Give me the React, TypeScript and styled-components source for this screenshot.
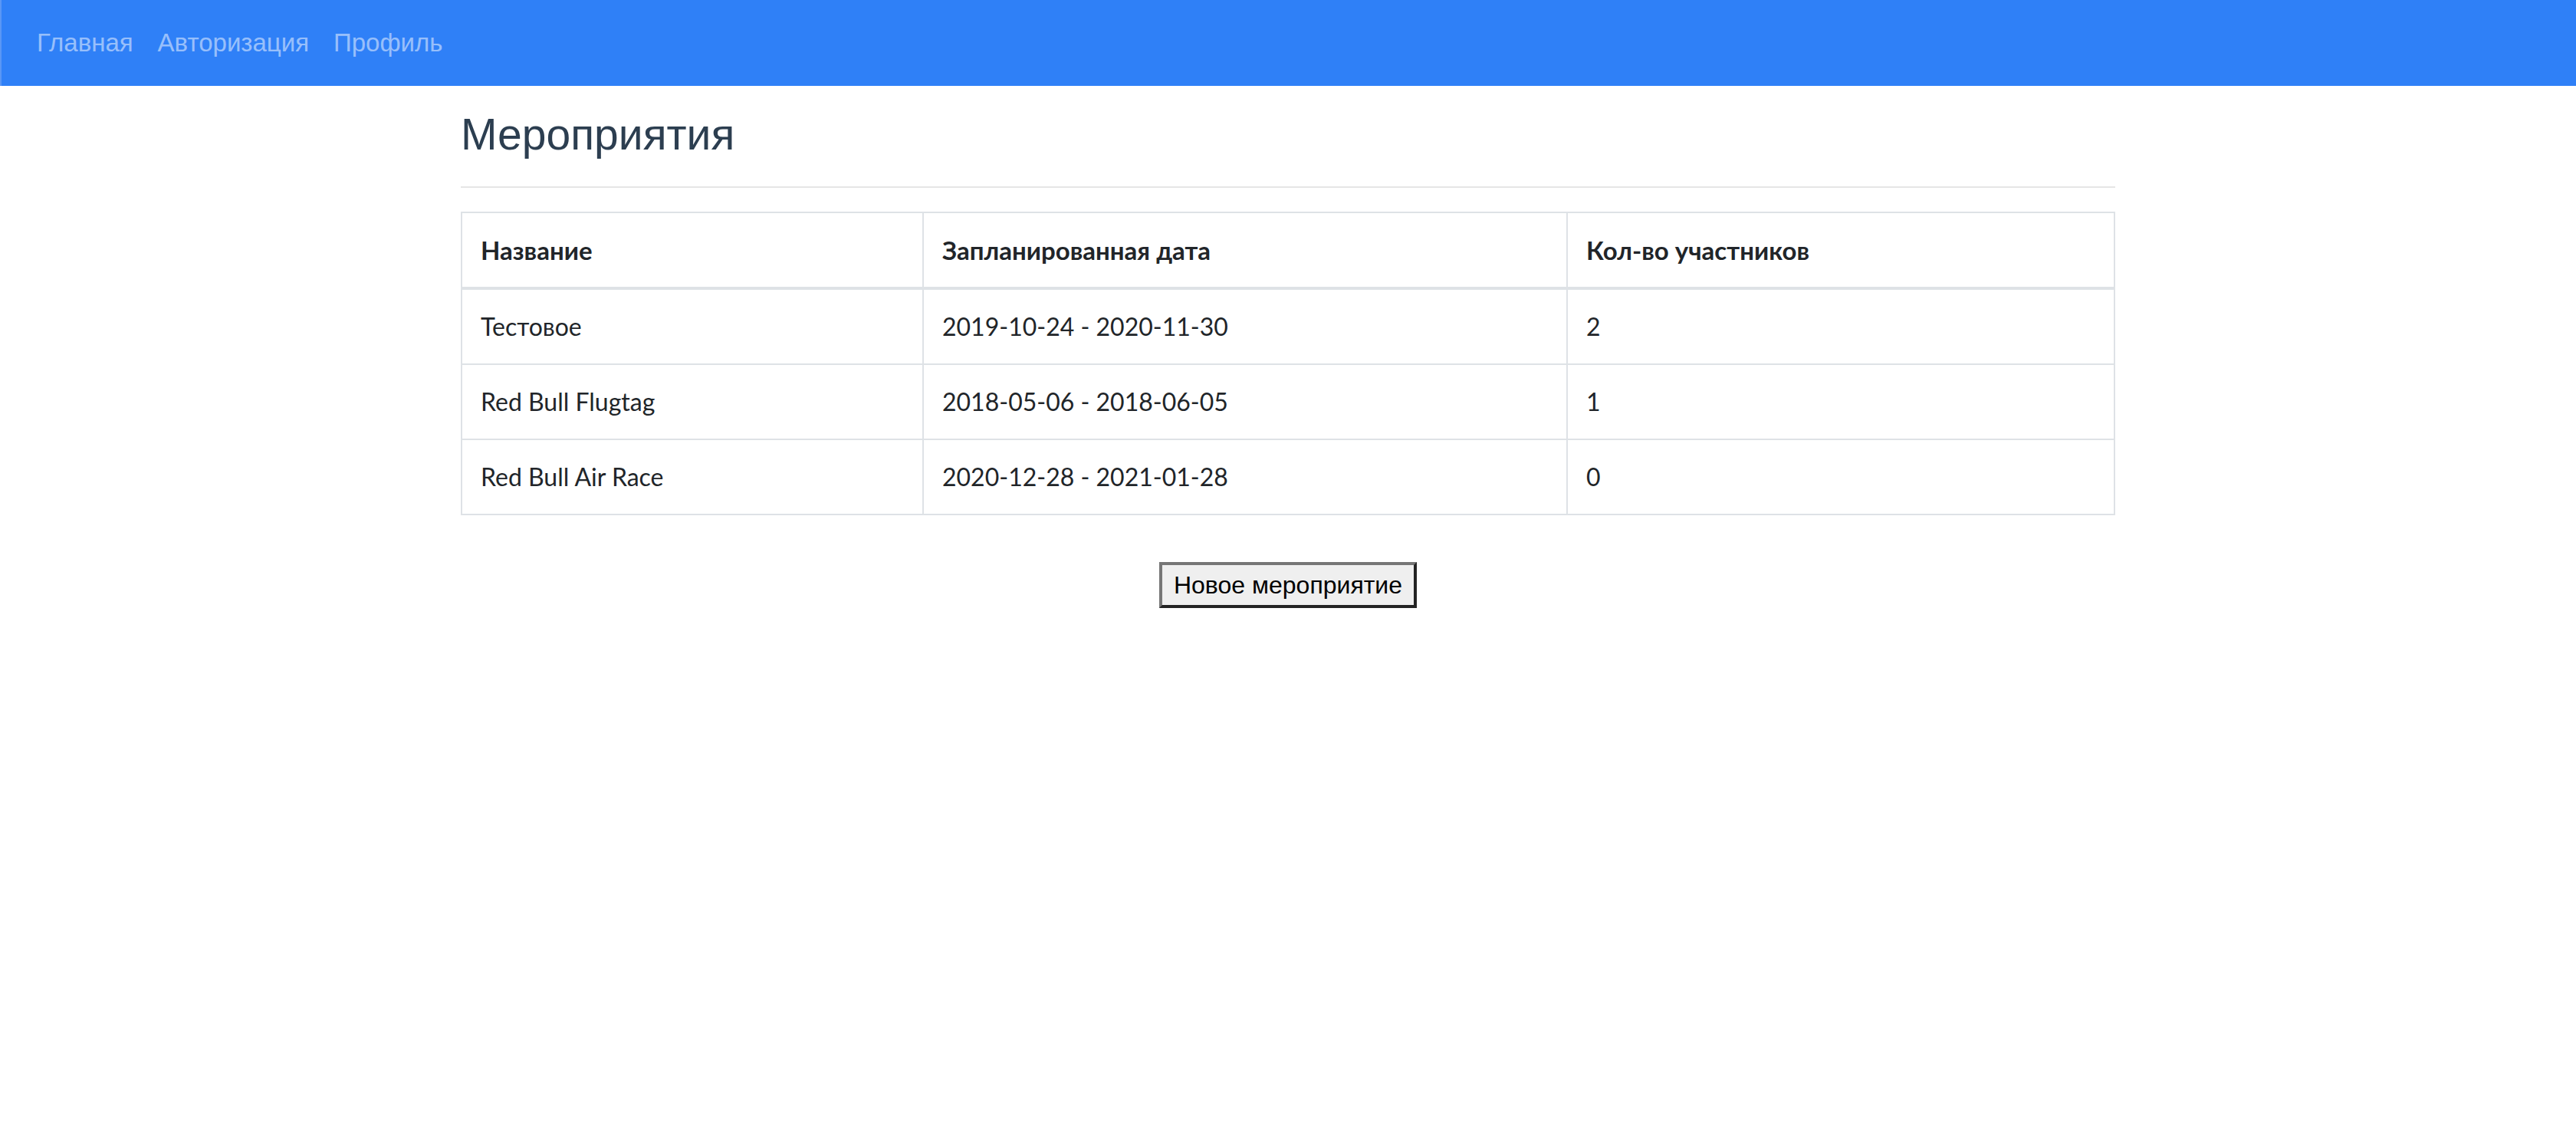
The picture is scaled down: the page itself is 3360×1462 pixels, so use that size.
import React from "react";
import styled, { createGlobalStyle } from "styled-components";

const GlobalStyle = createGlobalStyle`
  html, body { margin: 0; padding: 0; background: #ffffff; }
  body { font-family: "Liberation Sans", Arial, sans-serif; }
`;

const NavBar = styled.nav`
  display: flex;
  align-items: center;
  height: 112px;
  box-sizing: border-box;
  padding: 16px 32px 16px 30px;
  background: #2f80f7;
  border-left: 2px solid #5a97f5;
`;

const NavLink = styled.a`
  padding: 16px;
  font-family: "Liberation Sans", Arial, sans-serif;
  font-size: 33px;
  line-height: 48px;
  color: rgba(255, 255, 255, 0.52);
  text-decoration: none;
`;

const Container = styled.main`
  width: 2158px;
  margin: 0 auto;
  padding-top: 30px;
`;

const Title = styled.h1`
  margin: 0;
  font-family: "Liberation Sans", Arial, sans-serif;
  font-weight: 400;
  font-size: 57px;
  line-height: 67px;
  color: #2c3e50;
`;

const Divider = styled.hr`
  margin: 34px 0 31px;
  border: 0;
  border-top: 2px solid #e6e6e6;
`;

const Table = styled.table`
  width: 100%;
  border-collapse: collapse;
  font-family: Lato, "Noto Sans", sans-serif;
  font-size: 32px;
  line-height: 48px;
  color: #212529;
`;

const HeadCell = styled.th<{ $w?: number }>`
  ${(p) => (p.$w ? `width: ${p.$w}px;` : "")}
  box-sizing: border-box;
  padding: 24px 24px;
  text-align: left;
  font-size: 33px;
  font-weight: 700;
  border: 2px solid #dee2e6;
  border-bottom-width: 4px;
`;

const Cell = styled.td`
  padding: 24px 24px;
  border: 2px solid #dee2e6;
  font-weight: 400;
`;

const Actions = styled.div`
  display: flex;
  justify-content: center;
  margin-top: 61px;
`;

const Button = styled.button`
  font-family: "Liberation Sans", Arial, sans-serif;
  font-size: 32px;
  line-height: 36px;
  color: #000;
  background: #efefef;
  padding: 8px 15px;
  border-width: 4px;
  border-style: solid;
  border-color: #767676 #232323 #232323 #767676;
  height: 60px;
  box-sizing: border-box;
`;

const events = [
  { name: "Тестовое", dates: "2019-10-24 - 2020-11-30", count: 2 },
  { name: "Red Bull Flugtag", dates: "2018-05-06 - 2018-06-05", count: 1 },
  { name: "Red Bull Air Race", dates: "2020-12-28 - 2021-01-28", count: 0 },
];

export default function App() {
  return (
    <>
      <GlobalStyle />
      <NavBar>
        <NavLink href="#">Главная</NavLink>
        <NavLink href="#">Авторизация</NavLink>
        <NavLink href="#">Профиль</NavLink>
      </NavBar>
      <Container>
        <Title>Мероприятия</Title>
        <Divider />
        <Table>
          <thead>
            <tr>
              <HeadCell $w={602}>Название</HeadCell>
              <HeadCell $w={840}>Запланированная дата</HeadCell>
              <HeadCell>Кол-во участников</HeadCell>
            </tr>
          </thead>
          <tbody>
            {events.map((e) => (
              <tr key={e.name}>
                <Cell>{e.name}</Cell>
                <Cell>{e.dates}</Cell>
                <Cell>{e.count}</Cell>
              </tr>
            ))}
          </tbody>
        </Table>
        <Actions>
          <Button>Новое мероприятие</Button>
        </Actions>
      </Container>
    </>
  );
}
